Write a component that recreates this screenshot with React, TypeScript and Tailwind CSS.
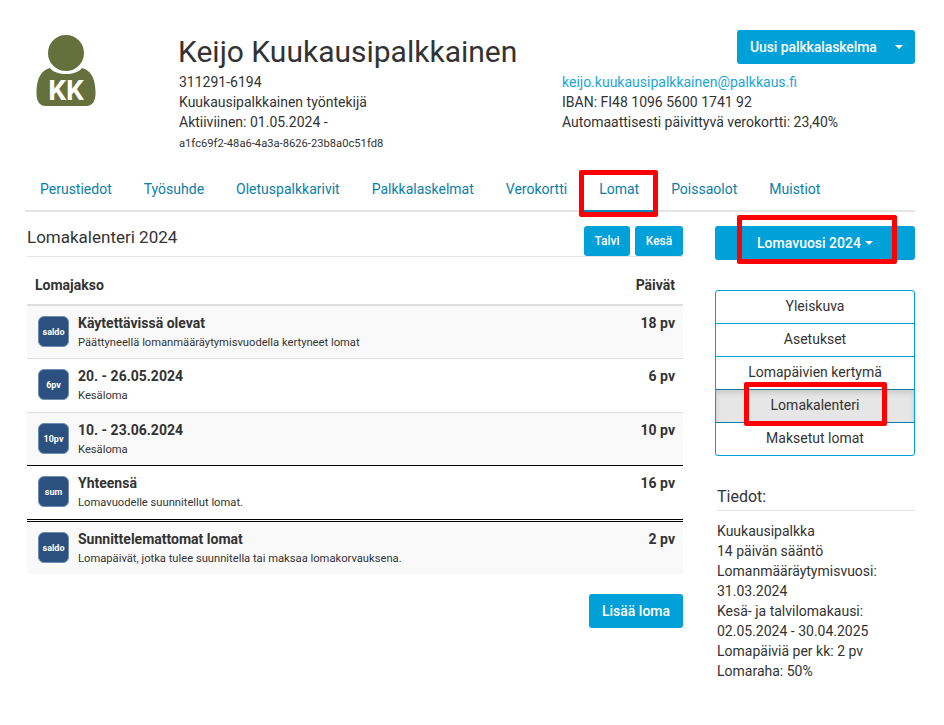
const TABS = ['Perustiedot', 'Työsuhde', 'Oletuspalkkarivit', 'Palkkalaskelmat', 'Verokortti', 'Lomat', 'Poissaolot', 'Muistiot']

const ROWS = [
  { badge: 'saldo', title: 'Käytettävissä olevat', sub: 'Päättyneellä lomanmääräytymisvuodella kertyneet lomat', days: '18 pv', rowClass: 'bg-[#f9f9f9] border-b border-[#ddd] h-[53px]' },
  { badge: '6pv', title: '20. - 26.05.2024', sub: 'Kesäloma', days: '6 pv', rowClass: 'border-b border-[#ddd] h-[54px] bg-white' },
  { badge: '10pv', title: '10. - 23.06.2024', sub: 'Kesäloma', days: '10 pv', rowClass: 'bg-[#f9f9f9] border-b border-black h-[53px]' },
  { badge: 'sum', title: 'Yhteensä', sub: 'Lomavuodelle suunnitellut lomat.', days: '16 pv', rowClass: 'border-b-[3px] border-double border-black h-[56px] bg-white' },
  { badge: 'saldo', title: 'Sunnittelemattomat lomat', sub: 'Lomapäivät, jotka tulee suunnitella tai maksaa lomakorvauksena.', days: '2 pv', rowClass: 'bg-[#f9f9f9] h-[52px]' },
]

const MENU = ['Yleiskuva', 'Asetukset', 'Lomapäivien kertymä', 'Lomakalenteri', 'Maksetut lomat']

const INFO = [
  'Kuukausipalkka',
  '14 päivän sääntö',
  'Lomanmääräytymisvuosi:',
  '31.03.2024',
  'Kesä- ja talvilomakausi:',
  '02.05.2024 - 30.04.2025',
  'Lomapäiviä per kk: 2 pv',
  'Lomaraha: 50%',
]

function Caret() {
  return <span className="inline-block w-0 h-0 border-x-[4px] border-x-transparent border-t-[4px] border-t-white" />
}

function Avatar() {
  return (
    <div className="relative w-[60px] h-[72px]">
      <svg width="60" height="72" viewBox="0 0 60 72">
        <circle cx="30" cy="18" r="18" fill="#65703c" />
        <path d="M14 33 C20 41 40 41 46 33 C54 35 59 42 59.500 56 C60 65 57 71 50 71 L10 71 C3 71 0 65 0.500 56 C1 42 6 35 14 33 Z" fill="#65703c" />
      </svg>
      <span className="absolute left-0 right-0 top-[41px] text-center text-[28px] leading-[30px] font-bold text-white">KK</span>
    </div>
  )
}

export default function App() {
  return (
    <div className="w-[944px] h-[725px] bg-white text-[#333] text-[14px] leading-[20px] font-['Roboto',sans-serif] pl-[25px] pr-[29px] pt-[30px] overflow-hidden">
      <div className="flex h-[138px]">
        <div className="w-[154px] pl-[11px] pt-[5px]">
          <Avatar />
        </div>
        <div className="flex-1 min-w-0">
          <div className="flex justify-between">
            <h1 className="text-[30px] leading-[44px] -ml-px">Keijo Kuukausipalkkainen</h1>
            <div className="flex h-[34px] w-[178px] bg-[#00a0d8] rounded-[3px] text-white font-medium items-center">
              <span className="pl-[13px] w-[158px] tracking-[-0.1px]">Uusi palkkalaskelma</span>
              <Caret />
            </div>
          </div>
          <div className="flex -mt-[2px]">
            <div className="w-[383px]">
              <div>311291-6194</div>
              <div>Kuukausipalkkainen työntekijä</div>
              <div>Aktiiviinen: 01.05.2024 -</div>
              <div className="text-[11.2px] pt-[2px]">a1fc69f2-48a6-4a3a-8626-23b8a0c51fd8</div>
            </div>
            <div>
              <div className="text-[#1ca5d8]">keijo.kuukausipalkkainen@palkkaus.fi</div>
              <div>IBAN: FI48 1096 5600 1741 92</div>
              <div>Automaattisesti päivittyvä verokortti: 23,40%</div>
            </div>
          </div>
        </div>
      </div>

      <div className="flex gap-[2px] h-[44px] border-b-2 border-[#e5e5e5]">
        {TABS.map((tab) => (
          <div
            key={tab}
            className={
              tab === 'Lomat'
                ? 'relative px-[15px] h-[45px] pt-[11px] text-[#0b7ea8] border-b-[3px] border-[#0b86b4]'
                : 'px-[15px] pt-[11px] text-[#0b7ea8]'
            }
          >
            {tab}
            {tab === 'Lomat' && (
              <span className="absolute -left-[5px] -right-[4px] top-[2px] h-[47px] border-[5px] border-[#ff0000] rounded-[2px]" />
            )}
          </div>
        ))}
      </div>

      <div className="flex justify-between pt-[14px]">
        <div className="w-[656px] ml-[2px]">
          <div className="flex items-center justify-between h-[31px] border-b border-[#e5e5e5]">
            <h2 className="text-[17px] pb-[8px]">Lomakalenteri 2024</h2>
            <div className="flex gap-[5px] h-[30px] self-start text-white text-[12px] font-medium">
              <div className="w-[46px] bg-[#00a0d8] rounded-[3px] flex items-center justify-center">Talvi</div>
              <div className="w-[48px] bg-[#00a0d8] rounded-[3px] flex items-center justify-center">Kesä</div>
            </div>
          </div>

          <div className="flex justify-between items-center h-[49px] pt-[9px] px-[8px] font-bold border-b-2 border-[#ddd]">
            <span>Lomajakso</span>
            <span>Päivät</span>
          </div>

          {ROWS.map((row, i) => (
            <div key={i} className={`flex pl-[11px] pr-[8px] pt-[8px] ${row.rowClass}`}>
              <div className="w-[31px] h-[31px] mt-[2px] shrink-0 rounded-[6px] bg-[#2c5180] border border-[#6f8fb0] flex items-center justify-center text-white text-[9px] font-bold">
                {row.badge}
              </div>
              <div className="flex-1 pl-[9px]">
                <div className="font-bold leading-[18px]">{row.title}</div>
                <div className="text-[11.2px] leading-[18px] mt-[2px]">{row.sub}</div>
              </div>
              <div className="font-bold leading-[18px]">{row.days}</div>
            </div>
          ))}

          <div className="flex justify-end pt-[20px]">
            <div className="w-[94px] h-[34px] bg-[#00a0d8] rounded-[3px] text-white font-medium flex items-center justify-center">
              Lisää loma
            </div>
          </div>
        </div>

        <div className="w-[200px]">
          <div className="relative h-[34px] pb-[1px] bg-[#00a0d8] rounded-[3px] text-white font-medium flex items-center justify-center gap-[4px]">
            Lomavuosi 2024 <Caret />
            <span className="absolute left-[22px] right-[18px] -top-[11px] h-[49px] border-[5px] border-[#ff0000] rounded-[2px]" />
          </div>

          <div className="mt-[30px] border border-[#00a0d8] rounded-[3px]">
            {MENU.map((item, i) => (
              <div
                key={item}
                className={
                  item === 'Lomakalenteri'
                    ? 'relative z-10 h-[34px] -mb-px pb-[2px] flex items-center justify-center bg-[#e6e6e6] border-y border-[#0b7ea8] shadow-[inset_0_3px_5px_rgba(0,0,0,0.125)]'
                    : i === 0
                      ? 'h-[32px] pb-[2px] flex items-center justify-center'
                      : 'h-[33px] pb-[2px] flex items-center justify-center border-t border-[#00a0d8]'
                }
              >
                {item}
                {item === 'Lomakalenteri' && (
                  <span className="absolute left-[28px] right-[27px] -top-[8px] h-[44px] border-[5px] border-[#ff0000] rounded-[2px]" />
                )}
              </div>
            ))}
          </div>

          <div className="ml-[2px] mt-[31px]">
            <h3 className="text-[16px] leading-[20px] pb-[3px] border-b border-[#e5e5e5]">Tiedot:</h3>
            <div className="pt-[10px]">
              {INFO.map((line) => (
                <div key={line}>{line}</div>
              ))}
            </div>
          </div>
        </div>
      </div>
    </div>
  )
}
